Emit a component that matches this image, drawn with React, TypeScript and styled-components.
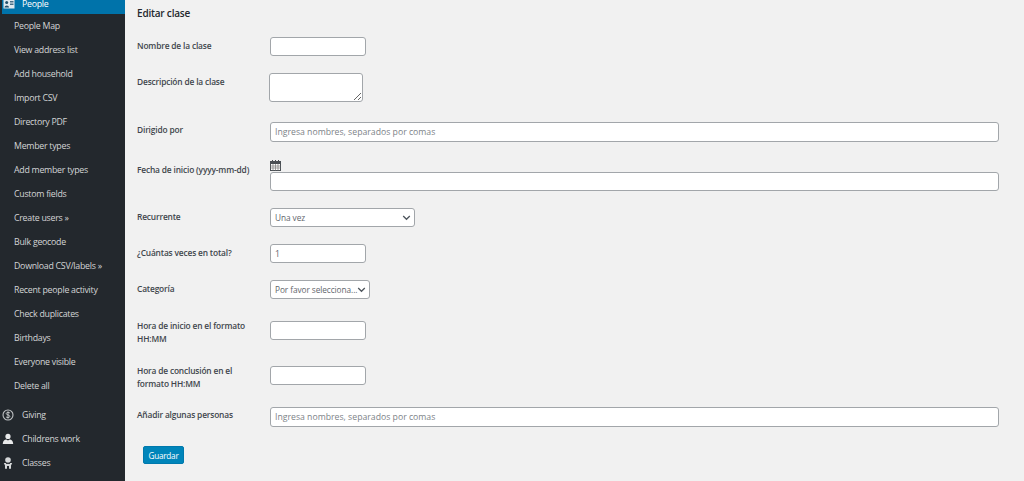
import React from 'react';
import styled, { createGlobalStyle } from 'styled-components';

const Global = createGlobalStyle`
  html, body { margin: 0; padding: 0; height: 481px; overflow: hidden; background: #f1f1f1; }
  #root { height: 481px; }
  * { box-sizing: border-box; }
`;

const font = `"Open Sans", "Noto Sans", sans-serif`;

const Page = styled.div`
  display: flex;
  height: 481px;
  overflow: hidden;
  font-family: ${font};
`;

const Sidebar = styled.nav`
  width: 125px;
  flex: none;
  background: #23282d;
  overflow: hidden;
`;

const Menu = styled.div`
  margin-top: -6px;
  display: flex;
  flex-direction: column;
`;

const ActiveItem = styled.div`
  height: 20px;
  margin-left: 2px;
  background: #0073aa;
  color: #fff;
  display: flex;
  align-items: center;
  gap: 7px;
  padding-left: 1px;
  font-size: 8.8px;
  letter-spacing: -0.03em;
`;

const SubItem = styled.div`
  height: 24px;
  padding-left: 14px;
  color: #d3d5d6;
  font-size: 8.8px;
  letter-spacing: -0.03em;
  display: flex;
  align-items: center;
`;

const SubList = styled.div`
  display: flex;
  flex-direction: column;
  padding-bottom: 5px;
`;

const TopItem = styled.div`
  height: 24px;
  display: flex;
  align-items: center;
  gap: 8px;
  padding-left: 2px;
  color: #d3d5d6;
  font-size: 8.8px;
  letter-spacing: -0.03em;
`;

const IconBox = styled.span`
  width: 12px;
  height: 12px;
  flex: none;
  display: flex;
  color: #bfc2c4;
`;

const Main = styled.main`
  flex: 1;
  padding: 6px 25px 0 12px;
  color: #3c434a;
`;

const Title = styled.h1`
  margin: 0;
  height: 31px;
  font-size: 10px;
  line-height: 14px;
  font-weight: 600;
  letter-spacing: -0.02em;
  color: #23282d;
`;

const Row = styled.div<{ $h: number }>`
  display: grid;
  grid-template-columns: 133px 1fr;
  height: ${p => p.$h}px;
  align-items: start;
`;

const Label = styled.label<{ $up?: number }>`
  font-size: 8.4px;
  line-height: 13px;
  font-weight: 600;
  color: #3f464c;
  padding-top: 2px;
  margin-top: ${p => -(p.$up ?? 0)}px;
  letter-spacing: -0.02em;
  width: 120px;
`;

const Field = styled.input<{ $w?: number; $h?: number }>`
  display: block;
  width: ${p => (p.$w ? `${p.$w}px` : '100%')};
  height: ${p => p.$h ?? 19}px;
  border: 1px solid #a2a6aa;
  border-radius: 3px;
  background: #fff;
  font-family: ${font};
  font-size: 8.7px;
  color: #5f666c;
  padding: 0 4px;
  outline: none;
  &::placeholder { color: #7d8388; opacity: 1; }
`;

const Area = styled.textarea`
  display: block;
  width: 94px;
  height: 29px;
  margin-left: -1px;
  border: 1px solid #a2a6aa;
  border-radius: 3px;
  background: #fff;
  resize: both;
  outline: none;
`;

const SelectBox = styled.div<{ $w: number }>`
  width: ${p => p.$w}px;
  height: 19px;
  border: 1px solid #a2a6aa;
  border-radius: 3px;
  background: #fff;
  font-size: 8.3px;
  letter-spacing: -0.01em;
  color: #5f666c;
  display: flex;
  align-items: center;
  justify-content: space-between;
  padding: 0 3px 0 4px;
  white-space: nowrap;
  overflow: hidden;
  & > svg { flex: none; }
`;

const DateWrap = styled.div`
  display: flex;
  flex-direction: column;
  margin-top: -1px;
`;

const CalIcon = styled.svg`
  width: 11px;
  height: 11px;
  display: block;
  margin-bottom: 1px;
`;

const Save = styled.button`
  display: block;
  margin: 0 0 0 6px;
  width: 41px;
  height: 18px;
  padding: 0;
  border: 1px solid #0079ad;
  border-radius: 2px;
  background: #0085ba;
  color: #fff;
  font-family: ${font};
  font-size: 8.2px;
  letter-spacing: -0.03em;
`;

const Chevron = () => (
  <svg width="9" height="9" viewBox="0 0 9 9" fill="none" stroke="#50575e" strokeWidth="1.3">
    <path d="M1.2 3 L4.5 6.3 L7.8 3" />
  </svg>
);

const subs = ['People Map', 'View address list', 'Add household', 'Import CSV', 'Directory PDF', 'Member types', 'Add member types', 'Custom fields', 'Create users »', 'Bulk geocode', 'Download CSV/labels »', 'Recent people activity', 'Check duplicates', 'Birthdays', 'Everyone visible', 'Delete all'];

export default function App() {
  return (
    <Page>
      <Global />
      <Sidebar>
        <Menu>
          <ActiveItem>
            <IconBox>
              <svg viewBox="0 0 12 12" width="12" height="12">
                <rect x="0.5" y="1.5" width="11" height="9" fill="#dfe8ee" />
                <circle cx="3.7" cy="4.4" r="1.5" fill="#23506b" />
                <path d="M1.5 9.5 C1.5 6.8 6 6.8 6 9.5Z" fill="#23506b" />
                <rect x="7" y="3.2" width="3.5" height="1.2" fill="#23506b" />
                <rect x="7" y="5.6" width="3.5" height="1.2" fill="#23506b" />
              </svg>
            </IconBox>
            People
          </ActiveItem>
          <SubList>
            {subs.map(s => <SubItem key={s}>{s}</SubItem>)}
          </SubList>
          <TopItem>
            <IconBox>
              <svg viewBox="0 0 12 12" width="12" height="12" fill="none" stroke="currentColor">
                <circle cx="6" cy="6" r="5" strokeWidth="1.1" />
                <path d="M8 4.2 C7.4 3 4.3 3 4.2 4.6 C4.2 6.2 7.9 5.6 7.8 7.4 C7.7 9 4.6 9 4 7.7 M6 2.4 V9.6" strokeWidth="1" />
              </svg>
            </IconBox>
            Giving
          </TopItem>
          <TopItem>
            <IconBox>
              <svg viewBox="0 0 12 12" width="12" height="12" fill="#e8e9ea">
                <circle cx="6" cy="3.4" r="2.6" />
                <path d="M0.8 11 C0.8 7.4 3 6.6 4.3 6.4 L6 7.6 L7.7 6.4 C9 6.6 11.2 7.4 11.2 11Z" />
              </svg>
            </IconBox>
            Childrens work
          </TopItem>
          <TopItem>
            <IconBox>
              <svg viewBox="0 0 12 12" width="12" height="12" fill="#d6d8d9">
                <circle cx="6" cy="3" r="2.8" />
                <path d="M1.8 6 H10.2 L9 8.6 V11.8 H7 V9 H5 V11.8 H3 V8.6Z" />
                <rect x="4" y="5.9" width="4" height="1" fill="#23282d" />
              </svg>
            </IconBox>
            Classes
          </TopItem>
        </Menu>
      </Sidebar>
      <Main>
        <Title>Editar clase</Title>
        <Row $h={36}><Label>Nombre de la clase</Label><Field $w={96} /></Row>
        <Row $h={49}><Label>Descripción de la clase</Label><Area /></Row>
        <Row $h={39}><Label $up={1}>Dirigido por</Label><Field $h={20} placeholder="Ingresa nombres, separados por comas" /></Row>
        <Row $h={47}>
          <Label>Fecha de inicio (yyyy-mm-dd)</Label>
          <DateWrap>
            <CalIcon viewBox="0 0 11 11">
              <rect x="0.5" y="1.5" width="10" height="9" fill="#fff" stroke="#4a4f54" />
              <rect x="0.5" y="1.5" width="10" height="2.5" fill="#4a4f54" />
              <path d="M2.5 0 V2.5 M5.5 0 V2.5 M8.5 0 V2.5" stroke="#4a4f54" />
              <path d="M0.5 6 H10.5 M0.5 8 H10.5 M3 4 V10.5 M5.5 4 V10.5 M8 4 V10.5" stroke="#777" strokeWidth="0.7" />
            </CalIcon>
            <Field />
          </DateWrap>
        </Row>
        <Row $h={36}><Label>Recurrente</Label><SelectBox $w={145}>Una vez<Chevron /></SelectBox></Row>
        <Row $h={36}><Label>¿Cuántas veces en total?</Label><Field $w={96} defaultValue="1" /></Row>
        <Row $h={41}><Label>Categoría</Label><SelectBox $w={100}>Por favor selecciona...<Chevron /></SelectBox></Row>
        <Row $h={45}><Label $up={4}>Hora de inicio en el formato HH:MM</Label><Field $w={96} /></Row>
        <Row $h={41}><Label $up={4}>Hora de conclusión en el formato HH:MM</Label><Field $w={96} /></Row>
        <Row $h={39}><Label $up={1}>Añadir algunas personas</Label><Field $h={20} placeholder="Ingresa nombres, separados por comas" /></Row>
        <Save>Guardar</Save>
      </Main>
    </Page>
  );
}
